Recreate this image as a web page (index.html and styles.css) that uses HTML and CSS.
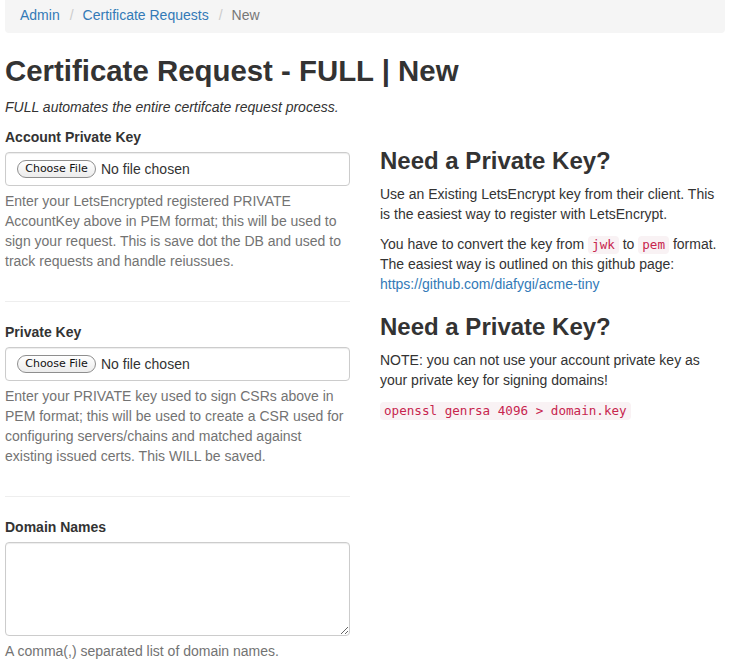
FILE: index.html
```html
<!DOCTYPE html>
<html>
<head>
<meta charset="utf-8">
<link rel="stylesheet" href="styles.css">
</head>
<body>
<div class="container">
  <ol class="breadcrumb">
    <li><a href="#">Admin</a></li>
    <li class="sep">/</li>
    <li><a href="#">Certificate Requests</a></li>
    <li class="sep">/</li>
    <li class="active">New</li>
  </ol>
  <h2 class="page-title">Certificate Request - FULL | New</h2>
  <p class="lead-note"><em>FULL automates the entire certifcate request process.</em></p>
  <div class="row">
    <div class="col-left">
      <div class="form-group">
        <label class="label">Account Private Key</label>
        <div class="form-control file-control"><span class="file-btn">Choose File</span><span class="file-name">No file chosen</span></div>
        <p class="help-block">Enter your LetsEncrypted registered PRIVATE AccountKey above in PEM format; this will be used to sign your request. This is save dot the DB and used to track requests and handle reiussues.</p>
      </div>
      <hr class="divider">
      <div class="form-group">
        <label class="label">Private Key</label>
        <div class="form-control file-control"><span class="file-btn">Choose File</span><span class="file-name">No file chosen</span></div>
        <p class="help-block">Enter your PRIVATE key used to sign CSRs above in PEM format; this will be used to create a CSR used for configuring servers/chains and matched against existing issued certs. This WILL be saved.</p>
      </div>
      <hr class="divider">
      <div class="form-group">
        <label class="label">Domain Names</label>
        <textarea class="form-control textarea"></textarea>
        <p class="help-block">A comma(,) separated list of domain names.</p>
      </div>
    </div>
    <div class="col-right">
      <h3 class="side-title">Need a Private Key?</h3>
      <p class="para">Use an Existing LetsEncrypt key from their client. This is the easiest way to register with LetsEncrypt.</p>
      <p class="para">You have to convert the key from <code class="code">jwk</code> to <code class="code">pem</code> format. The easiest way is outlined on this github page: <a href="#">https://github.com/diafygi/acme-tiny</a></p>
      <h3 class="side-title">Need a Private Key?</h3>
      <p class="para">NOTE: you can not use your account private key as your private key for signing domains!</p>
      <p class="para"><code class="code">openssl genrsa 4096 &gt; domain.key</code></p>
    </div>
  </div>
</div>
</body>
</html>
```

FILE: styles.css
```css
html, body {
  margin: 0;
  padding: 0;
  background: #fff;
}
body {
  font-family: "Liberation Sans", Arial, Helvetica, sans-serif;
  font-size: 14px;
  line-height: 20px;
  color: #333;
}
a {
  color: #337ab7;
  text-decoration: none;
}
.container {
  width: 720px;
  margin-left: 5px;
}
.breadcrumb {
  list-style: none;
  margin: -3px 0 21px 0;
  padding: 8px 15px 8px 15px;
  background: #f5f5f5;
  border-radius: 0 0 4px 4px;
  display: flex;
  height: 20px;
}
.breadcrumb li {
  display: block;
}
.breadcrumb .sep {
  color: #ccc;
  padding: 0 9px 0 10px;
}
.breadcrumb .active {
  color: #777;
}
.page-title {
  font-size: 29.4px;
  line-height: 33px;
  font-weight: 700;
  margin: 20px 0 10px 0;
  color: #333;
}
.lead-note {
  margin: 0 0 10px 0;
}
.row {
  display: grid;
  grid-template-columns: 345px 345px;
  column-gap: 30px;
  align-items: start;
}
.form-group {
  margin: 0;
}
.label {
  display: block;
  font-weight: 700;
  margin-bottom: 5px;
}
.form-control {
  display: block;
  box-sizing: border-box;
  width: 345px;
  border: 1px solid #ccc;
  border-radius: 4px;
  box-shadow: inset 0 1px 1px rgba(0,0,0,.075);
  background: #fff;
}
.file-control {
  height: 34px;
  padding: 6px 11px;
  display: flex;
  align-items: center;
}
.file-btn {
  display: inline-block;
  box-sizing: border-box;
  height: 18px;
  width: 79px;
  border: 1px solid #8e8e8e;
  border-radius: 9px;
  background: linear-gradient(#fff, #ececec);
  font-family: "DejaVu Sans", sans-serif;
  font-size: 11px;
  line-height: 16px;
  text-align: center;
  color: #111;
}
.file-name {
  margin-left: 5px;
  color: #333;
}
.textarea {
  height: 94px;
  padding: 6px 12px;
  font: inherit;
  resize: vertical;
}
.help-block {
  margin: 5px 0 0 0;
  color: #737373;
}
.divider {
  border: 0;
  border-top: 1px solid #eee;
  margin: 30px 0 20px 0;
  height: 0;
}
.col-right {
  padding-top: 1px;
}
.side-title {
  font-size: 24px;
  line-height: 26px;
  font-weight: 700;
  margin: 20px 0 10px 0;
  color: #333;
}
.para {
  margin: 0 0 10px 0;
}
.code {
  display: inline-block;
  font-family: "DejaVu Sans Mono", monospace;
  font-size: 12.6px;
  line-height: 14px;
  padding: 2px 4px;
  color: #c7254e;
  background: #f9f2f4;
  border-radius: 4px;
}
```
